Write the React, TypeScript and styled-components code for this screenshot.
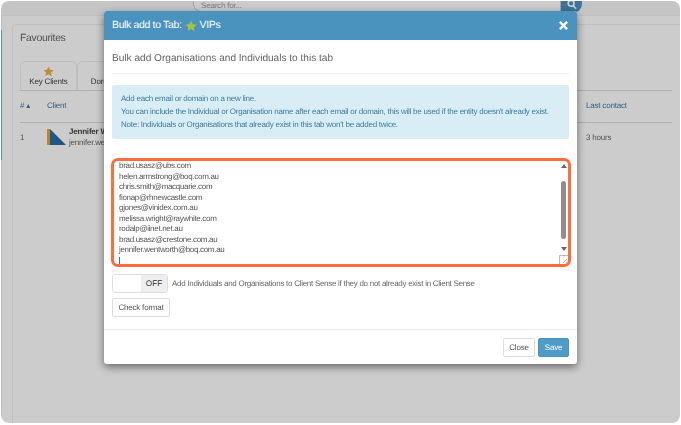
import React from "react";
import styled, { createGlobalStyle } from "styled-components";

const Global = createGlobalStyle`
  html, body { margin: 0; padding: 0; background: #fff; }
  body { width: 681px; height: 425px; overflow: hidden; font-family: "Liberation Sans", Arial, sans-serif; color: #555; text-rendering: geometricPrecision; }
  * { box-sizing: border-box; }
`;

const Frame = styled.div`
  position: relative; width: 679px; height: 422px; margin: 1px 0 0 1px;
  border-radius: 8px; overflow: hidden; background: #fff;
  filter: blur(0.35px);
`;
const TopBar = styled.div`
  height: 15px; border-bottom: 1px solid #f0f0f0; display: flex; padding-left: 192px; background: #f7f7f7;
`;
const SearchInput = styled.div`
  width: 368px; height: 11px; border: 1px solid #ccc; border-top: 0; border-radius: 0 0 0 8px; background: #fff;
  font-size: 8px; letter-spacing: -.2px; color: #999; padding: 0 0 0 7px; line-height: 9px;
`;
const SearchButton = styled.div`
  width: 21px; height: 13px; margin-top: -1px; background: #4b93bf; border-radius: 0 0 9px 0;
  display: flex; justify-content: center; align-items: flex-start;
`;
const Page = styled.div`
  position: relative; height: 408px; padding: 8px 0 0 10px; border-left: 1px solid #eee;
  &::before { content: ""; position: absolute; left: -1px; top: 14px; width: 1px; height: 130px; background: #7fb2d2; }
`;
const Panel = styled.div`
  width: 668px; height: 399px; border: 1px solid #f0f0f0; border-width: 1px 0 0 1px; border-radius: 5px 0 0 0; padding: 7px 8px 0 7px;
`;
const PanelTitle = styled.div` font-size: 10.4px; letter-spacing: -.3px; color: #666; line-height: 14px; margin-bottom: 15px; `;
const Tabs = styled.div` display: flex; height: 30px; border-bottom: 1px solid #ddd; `;
const Tab = styled.div`
  width: 57px; border: 1px solid #eee; border-bottom: 0; border-radius: 6px 6px 0 0;
  display: flex; flex-direction: column; align-items: center; justify-content: flex-end; padding-bottom: 4px;
  font-size: 8px; letter-spacing: -.2px; color: #444; white-space: nowrap;
`;
const HeadRow = styled.div`
  display: grid; grid-template-columns: 27px 1fr 86px; align-items: center; height: 32px; border-bottom: 1px solid #ddd; padding-bottom: 2px;
  font-size: 8px; letter-spacing: -.2px; color: #3b79a3;
`;
const BodyRow = styled.div`
  display: grid; grid-template-columns: 27px 22px 1fr 86px; align-items: center; height: 30px; padding-bottom: 2px;
  font-size: 8px; letter-spacing: -.2px; color: #666;
`;
const PersonName = styled.div` font-weight: 700; color: #444; line-height: 10px; `;
const PersonMail = styled.div` line-height: 11px; `;
const Backdrop = styled.div` position: absolute; inset: 0; background: rgba(0,0,0,.2); `;

const Modal = styled.div`
  position: absolute; left: 103px; top: 10px; width: 473px; height: 353px; background: #fff;
  border-radius: 3px; overflow: hidden; display: flex; flex-direction: column;
  box-shadow: 0 3px 9px rgba(0,0,0,.5);
`;
const ModalHead = styled.div`
  height: 29px; flex: none; background: #4b93bf; color: #fff; font-size: 10.4px; letter-spacing: -.3px; display: flex; align-items: center;
  justify-content: space-between; padding: 0 9px 0 8px;
`;
const TitleGroup = styled.div` display: flex; align-items: center; gap: 3px; `;
const ModalBody = styled.div` flex: 1; padding: 0 8px; border-bottom: 1px solid #eee; `;
const Subtitle = styled.div`
  height: 34px; margin: 0; border-bottom: 1px solid #f0f0f0; font-size: 10.1px; color: #666; padding-top: 12px; line-height: 13px;
`;
const Alert = styled.div`
  margin-top: 11px; height: 54px; background: #d9edf7; border-radius: 2px; padding: 7px 9px 0;
  font-size: 8px; letter-spacing: -.245px; line-height: 13px; color: #3d7a9f; white-space: nowrap;
`;
const Highlight = styled.div`
  margin: 19px -2px 0 -1px; height: 109px; border: 3px solid #ff6d3a; border-radius: 7px; display: flex; overflow: hidden; background: #fff;
`;
const Lines = styled.div`
  flex: 1; padding: 1px 0 0 5px; font-size: 8px; letter-spacing: -.31px; line-height: 10.5px; color: #555; margin-top: -1px;
`;
const Caret = styled.div` width: 1px; height: 9px; margin-top: 1px; background: #666; `;
const ScrollColumn = styled.div`
  position: relative; width: 9px; display: flex; flex-direction: column; align-items: center; padding-top: 3px;
`;
const ArrowUp = styled.div` width: 0; height: 0; border: 3px solid transparent; border-top: 0; border-bottom: 4px solid #666; `;
const Thumb = styled.div` width: 5px; height: 58px; margin-top: 13px; background: #8e8e8e; border-radius: 3px; `;
const ArrowDown = styled.div` width: 0; height: 0; margin-top: 8px; border: 3px solid transparent; border-bottom: 0; border-top: 4px solid #666; `;
const Grip = styled.svg` position: absolute; right: 0; bottom: 0; `;
const OptionRow = styled.div` display: flex; align-items: center; gap: 4px; margin-top: 7px; `;
const Toggle = styled.div`
  width: 56px; height: 19px; border: 1px solid #ddd; border-radius: 3px; display: flex; overflow: hidden;
`;
const ToggleBlank = styled.div` width: 28px; background: #fff; `;
const ToggleLabel = styled.div`
  flex: 1; background: #eee; color: #333; font-size: 8.2px; display: flex; align-items: center; justify-content: center;
`;
const OptionText = styled.div` font-size: 8px; letter-spacing: -.28px; color: #666; `;
const Btn = styled.div<{ $primary?: boolean }>`
  height: 19px; display: flex; align-items: center; justify-content: center; border-radius: 2px; font-size: 8px; letter-spacing: -.2px;
  border: 1px solid ${p => (p.$primary ? "#4b93bf" : "#ddd")};
  background: ${p => (p.$primary ? "#4f9cca" : "#fff")};
  color: ${p => (p.$primary ? "#fff" : "#555")};
`;
const CheckBtn = styled(Btn)` width: 58px; margin-top: 5px; `;
const CloseBtn = styled(Btn)` width: 32px; `;
const SaveBtn = styled(Btn)` width: 31px; `;
const ModalFoot = styled.div` height: 34px; flex: none; display: flex; justify-content: flex-end; gap: 3px; padding: 8px 8px 0 0; `;

const Star = ({ size, color }: { size: number; color: string }) => (
  <svg width={size} height={size} viewBox="0 0 24 24"><path fill={color} d="M12 1l3.4 7.3 7.9 1-5.8 5.5 1.5 7.9L12 18l-7 3.7 1.5-7.9L.7 9.3l7.9-1z" /></svg>
);

const emails = [
  "brad.usasz@ubs.com", "helen.armstrong@boq.com.au", "chris.smith@macquarie.com", "fionap@rhnewcastle.com",
  "gjones@vinidex.com.au", "melissa.wright@raywhite.com", "rodalp@iinet.net.au", "brad.usasz@crestone.com.au",
  "jennifer.wentworth@boq.com.au",
];

export default function App() {
  return (
    <>
      <Global />
      <Frame>
        <TopBar>
          <SearchInput>Search for...</SearchInput>
          <SearchButton>
            <svg width="10" height="10" viewBox="0 0 24 24" fill="none" stroke="#fff" strokeWidth="4"><circle cx="10" cy="8" r="7" /><path d="M15 14l7 7" /></svg>
          </SearchButton>
        </TopBar>
        <Page>
          <Panel>
            <PanelTitle>Favourites</PanelTitle>
            <Tabs>
              <Tab><Star size={11} color="#eeb04a" />Key Clients</Tab>
              <Tab>Dormant</Tab>
            </Tabs>
            <HeadRow><span># ▴</span><span>Client</span><span>Last contact</span></HeadRow>
            <BodyRow>
              <span>1</span>
              <svg width="20" height="18" viewBox="0 0 20 18"><rect x="0" y="1" width="3" height="16" fill="#e9a62f" /><path d="M3 1l16 16H3z" fill="#2a6cab" /></svg>
              <div><PersonName>Jennifer Wentworth</PersonName><PersonMail>jennifer.wentworth@boq.com.au</PersonMail></div>
              <span>3 hours</span>
            </BodyRow>
          </Panel>
        </Page>
        <Backdrop />
        <Modal>
          <ModalHead>
            <TitleGroup>Bulk add to Tab: <Star size={12} color="#a4c639" /> VIPs</TitleGroup>
            <svg width="9" height="9" viewBox="0 0 10 10" stroke="#fff" strokeWidth="2.6"><path d="M1 1l8 8M9 1l-8 8" /></svg>
          </ModalHead>
          <ModalBody>
            <Subtitle>Bulk add Organisations and Individuals to this tab</Subtitle>
            <Alert>
              <div>Add each email or domain on a new line.</div>
              <div>You can include the Individual or Organisation name after each email or domain, this will be used if the entity doesn't already exist.</div>
              <div>Note: Individuals or Organisations that already exist in this tab won't be added twice.</div>
            </Alert>
            <Highlight>
              <Lines>
                {emails.map(e => <div key={e}>{e}</div>)}
                <Caret />
              </Lines>
              <ScrollColumn>
                <ArrowUp /><Thumb /><ArrowDown />
                <Grip width="9" height="9" viewBox="0 0 9 9" fill="none" stroke="#bbb"><path d="M.5 9V.5H9M8 4L4 8M8 7L7 8" /></Grip>
              </ScrollColumn>
            </Highlight>
            <OptionRow>
              <Toggle><ToggleBlank /><ToggleLabel>OFF</ToggleLabel></Toggle>
              <OptionText>Add Individuals and Organisations to Client Sense if they do not already exist in Client Sense</OptionText>
            </OptionRow>
            <CheckBtn>Check format</CheckBtn>
          </ModalBody>
          <ModalFoot>
            <CloseBtn>Close</CloseBtn>
            <SaveBtn $primary>Save</SaveBtn>
          </ModalFoot>
        </Modal>
      </Frame>
    </>
  );
}
